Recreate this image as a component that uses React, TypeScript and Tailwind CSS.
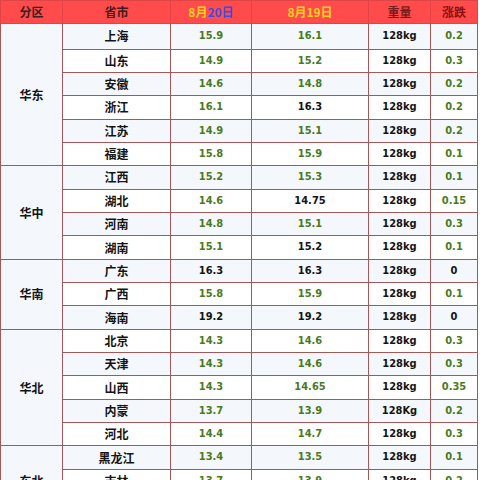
import React from 'react';

type Row = [string, string, string, string, string];
const groups: { r: string; rows: Row[] }[] = [
  {
    r: '华东',
    rows: [
      ['上海', '15.9', '16.1', '128kg', '0.2'],
      ['山东', '14.9', '15.2', '128kg', '0.3'],
      ['安徽', '14.6', '14.8', '128kg', '0.2'],
      ['浙江', '16.1', '!16.3', '128kg', '0.2'],
      ['江苏', '14.9', '15.1', '128kg', '0.2'],
      ['福建', '15.8', '15.9', '128kg', '0.1'],
    ],
  },
  {
    r: '华中',
    rows: [
      ['江西', '15.2', '15.3', '128kg', '0.1'],
      ['湖北', '14.6', '!14.75', '128kg', '0.15'],
      ['河南', '14.8', '15.1', '128kg', '0.3'],
      ['湖南', '15.1', '!15.2', '128kg', '0.1'],
    ],
  },
  {
    r: '华南',
    rows: [
      ['广东', '!16.3', '!16.3', '128kg', '!0'],
      ['广西', '15.8', '15.9', '128kg', '0.1'],
      ['海南', '!19.2', '!19.2', '128kg', '!0'],
    ],
  },
  {
    r: '华北',
    rows: [
      ['北京', '14.3', '14.6', '128kg', '0.3'],
      ['天津', '14.3', '14.6', '128kg', '0.3'],
      ['山西', '14.3', '14.65', '128kg', '0.35'],
      ['内蒙', '13.7', '13.9', '128Kg', '0.2'],
      ['河北', '14.4', '14.7', '128kg', '0.3'],
    ],
  },
  {
    r: '东北',
    rows: [
      ['黑龙江', '13.4', '13.5', '128kg', '0.1'],
      ['吉林', '13.7', '13.9', '128kg', '0.2'],
      ['辽宁', '13.8', '14.0', '128kg', '0.2'],
    ],
  },
];

const cjk = "font-['Noto_Sans_CJK_SC',sans-serif]";
const num = "font-['DejaVu_Sans_Condensed','DejaVu_Sans',sans-serif] [font-stretch:condensed]";
const bd = 'border border-[#a65858]';

function Num({ v, cls = '' }: { v: string; cls?: string }) {
  const black = v.startsWith('!');
  const t = black ? v.slice(1) : v;
  return (
    <td className={`${bd} ${num} ${cls} text-center text-[11px] font-bold ${black ? 'text-[#141414]' : 'text-[#4b7a1d]'}`}>
      {t}
    </td>
  );
}

export default function App() {
  let idx = 0;
  return (
    <div className="w-[480px] h-[480px] overflow-hidden bg-white">
      <table className="table-fixed border-collapse w-[477px]">
        <colgroup>
          <col className="w-[62px]" />
          <col className="w-[108px]" />
          <col className="w-[81px]" />
          <col className="w-[117px]" />
          <col className="w-[62px]" />
          <col className="w-[47px]" />
        </colgroup>
        <thead>
          <tr className="h-[23px] bg-[#ff4b4b]">
            <th className={`border border-[#e04545] ${cjk} text-[12px] font-bold text-[#3a2020]`}>分区</th>
            <th className={`border border-[#e04545] ${cjk} text-[12px] font-bold text-[#3a2020]`}>省市</th>
            <th className={`border border-[#e04545] ${cjk} text-[12px] font-bold`}>
              <span className="text-[#ffd21a]">8月</span>
              <span className="text-[#3b4fe8]">20日</span>
            </th>
            <th className={`border border-[#e04545] ${cjk} text-[12px] font-bold text-[#ffd21a]`}>8月19日</th>
            <th className={`border border-[#e04545] ${cjk} text-[12px] font-bold text-[#7a1c1c]`}>重量</th>
            <th className={`border border-[#e04545] ${cjk} text-[12px] font-bold text-[#8a1010]`}>涨跌</th>
          </tr>
        </thead>
        <tbody>
          {groups.map((g) =>
            g.rows.map((row, i) => {
              const k = idx++;
              const bg = k % 2 === 0 ? 'bg-[#f4f8fc]' : 'bg-white';
              const h = k === 0 ? 'h-[25.6px]' : 'h-[23.35px]';
              return (
                <tr key={row[0]} className={`${bg} ${h}`}>
                  {i === 0 && (
                    <td rowSpan={g.rows.length} className={`${bd} ${cjk} bg-[#f4f8fc] text-center text-[12px] font-bold text-[#141414]`}>
                      {g.r}
                    </td>
                  )}
                  <td className={`${bd} ${cjk} text-center text-[12px] font-bold text-[#141414]`}>{row[0]}</td>
                  <Num v={row[1]} />
                  <Num v={row[2]} />
                  <Num v={'!' + row[3]} />
                  <Num v={row[4]} />
                </tr>
              );
            })
          )}
        </tbody>
      </table>
    </div>
  );
}
